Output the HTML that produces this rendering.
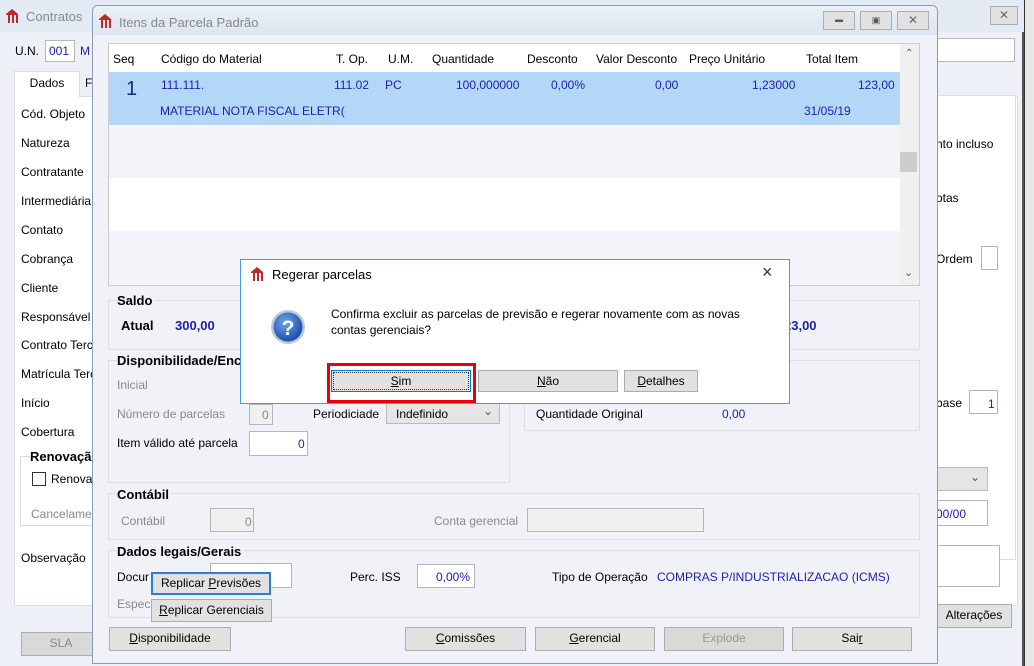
<!DOCTYPE html>
<html><head><meta charset="utf-8"><style>
*{box-sizing:border-box;margin:0;padding:0}
body{width:1034px;height:666px;overflow:hidden;background:#f0f0f0;font-family:"Liberation Sans",sans-serif;font-size:12px;color:#000;position:relative}
.a{position:absolute;white-space:nowrap}
.btn{position:absolute;background:#e1e1e1;border:1px solid #adadad;text-align:center;font-size:12px;line-height:21px}
.inp{position:absolute;background:#fff;border:1px solid #b5b5b5}
.grp{position:absolute;border:1px solid #dcdfe6;background:#f1f2f8}
.gl{position:absolute;font-weight:bold;font-size:13px;background:#f1f2f8;padding-right:3px}
.blue{color:#2020b0}
.gray{color:#888}
.logo{position:absolute;width:14px;height:14px}
</style></head><body>
<!-- back window -->
<div class="a" style="left:0;top:0;width:1024px;height:666px;background:#eef0f7;border-right:2px solid #555"></div>
<div class="a" style="left:0;top:0;width:1024px;height:32px;background:#e4eaf3"></div>
<div class="a" style="left:1024px;top:0;width:10px;height:666px;background:#e8e8e8;border-left:1px solid #333"></div>
<svg class="logo" style="left:5px;top:9px" viewBox="0 0 14 14"><path d="M1 5L7 0L13 5V14H11V6H9V14H7V6H5V14H3V6H1Z" fill="#c0282a"/></svg>
<div class="a" style="left:26px;top:9px;font-size:13px;color:#888">Contratos</div>
<div class="btn" style="left:990px;top:6px;width:28px;height:19px;line-height:16px;color:#666">✕</div>
<div class="a" style="left:15px;top:44px">U.N.</div>
<div class="inp" style="left:45px;top:40px;width:30px;height:22px"></div>
<div class="a blue" style="left:49px;top:44px">001</div>
<div class="a blue" style="left:80px;top:44px">M</div>
<div class="inp" style="left:935px;top:38px;width:80px;height:24px"></div>
<div class="a" style="left:14px;top:96px;width:1004px;height:510px;background:#fff;border:1px solid #ddd"></div>
<div class="a" style="left:14px;top:71px;width:66px;height:26px;background:#fff;border:1px solid #ddd;border-bottom:none;text-align:center;line-height:22px">Dados</div>
<div class="a" style="left:85px;top:76px">F</div>
<div class="a" style="left:21px;top:107px">Cód. Objeto</div>
<div class="a" style="left:21px;top:136px">Natureza</div>
<div class="a" style="left:21px;top:165px">Contratante</div>
<div class="a" style="left:21px;top:194px">Intermediária</div>
<div class="a" style="left:21px;top:223px">Contato</div>
<div class="a" style="left:21px;top:252px">Cobrança</div>
<div class="a" style="left:21px;top:281px">Cliente</div>
<div class="a" style="left:21px;top:310px">Responsável</div>
<div class="a" style="left:21px;top:338px">Contrato Terc</div>
<div class="a" style="left:21px;top:367px">Matrícula Terc</div>
<div class="a" style="left:21px;top:396px">Início</div>
<div class="a" style="left:21px;top:425px">Cobertura</div>
<div class="a" style="left:20px;top:456px;width:80px;height:70px;border:1px solid #ddd"></div>
<div class="a" style="left:30px;top:449px;font-weight:bold;font-size:13px;background:#fff">Renovaçã</div>
<div class="a" style="left:32px;top:472px;width:14px;height:14px;border:1px solid #333;background:#fff"></div>
<div class="a" style="left:51px;top:472px">Renova</div>
<div class="a gray" style="left:31px;top:507px">Cancelamen</div>
<div class="a" style="left:21px;top:551px">Observação</div>
<div class="btn" style="left:21px;top:632px;width:80px;height:24px;background:#d9d9d9;color:#888">SLA</div>
<div class="a" style="left:936px;top:95px;width:80px;height:465px;background:#fff;border:1px solid #ddd"></div>
<div class="a" style="left:936px;top:137px">nto incluso</div>
<div class="a" style="left:936px;top:191px">otas</div>
<div class="a" style="left:936px;top:252px">Ordem</div>
<div class="inp" style="left:981px;top:246px;width:17px;height:24px"></div>
<div class="a" style="left:936px;top:396px">base</div>
<div class="inp" style="left:969px;top:390px;width:29px;height:24px"></div>
<div class="a blue" style="left:988px;top:397px">1</div>
<div class="a" style="left:936px;top:467px;width:52px;height:24px;background:#e5e5e5;border:1px solid #bbb"></div>
<div class="a" style="left:970px;top:470px;color:#555">⌄</div>
<div class="inp" style="left:936px;top:500px;width:52px;height:26px"></div>
<div class="a blue" style="left:936px;top:507px">00/00</div>
<div class="inp" style="left:936px;top:545px;width:64px;height:42px"></div>
<div class="btn" style="left:936px;top:604px;width:76px;height:24px">Alterações</div>

<!-- front window -->
<div class="a" style="left:92px;top:5px;width:846px;height:659px;background:#f1f2f8;border:1px solid #8a9bb0;border-radius:6px 6px 0 0"></div>
<div class="a" style="left:93px;top:6px;width:844px;height:29px;background:linear-gradient(#eaf0f7,#dde5ef);border-radius:5px 5px 0 0"></div>
<svg class="logo" style="left:98px;top:14px" viewBox="0 0 14 14"><path d="M1 5L7 0L13 5V14H11V6H9V14H7V6H5V14H3V6H1Z" fill="#c0282a"/></svg>
<div class="a" style="left:119px;top:15px;font-size:13px;color:#888">Itens da Parcela Padrão</div>
<div class="btn" style="left:823px;top:11px;width:32px;height:19px;line-height:16px;font-size:8px;color:#555">▬</div>
<div class="btn" style="left:860px;top:11px;width:32px;height:19px;line-height:16px;font-size:9px;color:#555">▣</div>
<div class="btn" style="left:897px;top:11px;width:32px;height:19px;line-height:16px;color:#666">✕</div>
<!-- grid -->
<div class="a" style="left:108px;top:43px;width:812px;height:243px;background:#f3f4f9;border:1px solid #c8ccd4"></div>
<div class="a" style="left:109px;top:44px;width:791px;height:28px;background:#fff"></div>
<div class="a" style="left:109px;top:72px;width:791px;height:53px;background:#b3d7f7"></div>
<div class="a" style="left:109px;top:178px;width:791px;height:53px;background:#fff"></div>
<div class="a" style="left:900px;top:44px;width:19px;height:241px;background:#f0f0f0"></div>
<div class="a" style="left:900px;top:152px;width:17px;height:20px;background:#cdcdcd"></div>
<div class="a" style="left:905px;top:48px;font-size:10px;color:#555">⌃</div>
<div class="a" style="left:904px;top:266px;font-size:11px;color:#555">⌄</div>
<div class="a" style="left:113px;top:52px">Seq</div>
<div class="a" style="left:161px;top:52px">Código do Material</div>
<div class="a" style="left:336px;top:52px">T. Op.</div>
<div class="a" style="left:388px;top:52px">U.M.</div>
<div class="a" style="left:432px;top:52px">Quantidade</div>
<div class="a" style="left:527px;top:52px">Desconto</div>
<div class="a" style="left:596px;top:52px">Valor Desconto</div>
<div class="a" style="left:689px;top:52px">Preço Unitário</div>
<div class="a" style="left:806px;top:52px">Total Item</div>
<div class="a" style="left:126px;top:78px;font-size:20px;color:#1a2a80">1</div>
<div class="a blue" style="left:161px;top:78px">111.111.</div>
<div class="a blue" style="left:334px;top:78px">111.02</div>
<div class="a blue" style="left:385px;top:78px">PC</div>
<div class="a blue" style="left:456px;top:78px">100,000000</div>
<div class="a blue" style="left:551px;top:78px">0,00%</div>
<div class="a blue" style="left:655px;top:78px">0,00</div>
<div class="a blue" style="left:752px;top:78px">1,23000</div>
<div class="a blue" style="left:858px;top:78px">123,00</div>
<div class="a blue" style="left:160px;top:104px">MATERIAL NOTA FISCAL ELETR(</div>
<div class="a blue" style="left:804px;top:104px">31/05/19</div>
<!-- saldo -->
<div class="grp" style="left:108px;top:300px;width:812px;height:50px"></div>
<div class="gl" style="left:117px;top:293px">Saldo</div>
<div class="a" style="left:121px;top:318px;font-weight:bold;font-size:13px">Atual</div>
<div class="a blue" style="left:175px;top:318px;font-weight:bold;font-size:13px">300,00</div>
<div class="a blue" style="left:784px;top:318px;font-weight:bold;font-size:13px">23,00</div>
<!-- disponibilidade -->
<div class="grp" style="left:108px;top:360px;width:402px;height:123px"></div>
<div class="gl" style="left:117px;top:353px">Disponibilidade/Enc</div>
<div class="grp" style="left:524px;top:360px;width:396px;height:71px"></div>
<div class="a gray" style="left:117px;top:378px">Inicial</div>
<div class="a gray" style="left:117px;top:407px">Número de parcelas</div>
<div class="inp" style="left:249px;top:404px;width:24px;height:21px;background:#f0f0f0"></div>
<div class="a gray" style="left:262px;top:408px">0</div>
<div class="a" style="left:313px;top:407px">Periodiciade</div>
<div class="a" style="left:386px;top:402px;width:114px;height:22px;background:#e5e5e5;border:1px solid #bbb"></div>
<div class="a" style="left:396px;top:407px">Indefinido</div>
<div class="a" style="left:483px;top:404px;color:#555">⌄</div>
<div class="a" style="left:117px;top:436px">Item válido até parcela</div>
<div class="inp" style="left:249px;top:431px;width:59px;height:25px"></div>
<div class="a blue" style="left:298px;top:437px">0</div>
<div class="a" style="left:536px;top:407px">Quantidade Original</div>
<div class="a blue" style="left:722px;top:407px">0,00</div>
<!-- contabil -->
<div class="grp" style="left:108px;top:493px;width:812px;height:47px"></div>
<div class="gl" style="left:117px;top:487px">Contábil</div>
<div class="a gray" style="left:121px;top:514px">Contábil</div>
<div class="inp" style="left:210px;top:508px;width:44px;height:24px;background:#f0f0f0"></div>
<div class="a gray" style="left:245px;top:515px">0</div>
<div class="a gray" style="left:434px;top:514px">Conta gerencial</div>
<div class="inp" style="left:527px;top:508px;width:177px;height:24px;background:#f0f0f0"></div>
<!-- dados legais -->
<div class="grp" style="left:108px;top:550px;width:812px;height:68px"></div>
<div class="gl" style="left:117px;top:544px">Dados legais/Gerais</div>
<div class="a" style="left:117px;top:570px">Docur</div>
<div class="a gray" style="left:117px;top:597px">Espec</div>
<div class="inp" style="left:210px;top:563px;width:82px;height:25px"></div>
<div class="btn" style="left:151px;top:572px;width:120px;height:23px;border:2px solid #2a7fd4;line-height:19px">Replicar <u>P</u>revisões</div>
<div class="btn" style="left:151px;top:599px;width:121px;height:23px"><u>R</u>eplicar Gerenciais</div>
<div class="a" style="left:350px;top:570px">Perc. ISS</div>
<div class="inp" style="left:417px;top:564px;width:58px;height:24px"></div>
<div class="a blue" style="left:436px;top:570px">0,00%</div>
<div class="a" style="left:552px;top:570px">Tipo de Operação</div>
<div class="a blue" style="left:657px;top:570px">COMPRAS P/INDUSTRIALIZACAO (ICMS)</div>
<!-- bottom buttons -->
<div class="btn" style="left:109px;top:627px;width:122px;height:24px"><u>D</u>isponibilidade</div>
<div class="btn" style="left:405px;top:627px;width:121px;height:24px"><u>C</u>omissões</div>
<div class="btn" style="left:535px;top:627px;width:120px;height:24px"><u>G</u>erencial</div>
<div class="btn" style="left:664px;top:627px;width:120px;height:24px;background:#d9d9d9;color:#999">Explode</div>
<div class="btn" style="left:792px;top:627px;width:120px;height:24px">Sai<u>r</u></div>

<!-- dialog -->
<div class="a" style="left:240px;top:259px;width:550px;height:145px;background:#fff;border:1px solid #4a9ae0"></div>
<svg class="logo" style="left:250px;top:267px" viewBox="0 0 14 14"><path d="M1 5L7 0L13 5V14H11V6H9V14H7V6H5V14H3V6H1Z" fill="#c0282a"/></svg>
<div class="a" style="left:272px;top:267px;font-size:13px">Regerar parcelas</div>
<div class="a" style="left:762px;top:262px;font-size:18px;color:#333">×</div>
<svg class="a" style="left:270px;top:309px" width="36" height="36" viewBox="0 0 36 36"><defs><radialGradient id="g" cx="40%" cy="35%" r="65%"><stop offset="0" stop-color="#6fa4e8"/><stop offset="1" stop-color="#1c4fa8"/></radialGradient></defs><circle cx="18" cy="18" r="17" fill="#bcc6d4"/><circle cx="18" cy="18" r="14.5" fill="url(#g)"/><text x="18" y="26" text-anchor="middle" font-family="Liberation Sans" font-weight="bold" font-size="21" fill="#fff">?</text></svg>
<div class="a" style="left:331px;top:307px">Confirma excluir as parcelas de previsão e regerar novamente com as novas</div>
<div class="a" style="left:331px;top:323px">contas gerenciais?</div>
<div class="a" style="left:327px;top:363px;width:149px;height:40px;border:3px solid #e8000b"></div>
<div class="btn" style="left:331px;top:370px;width:140px;height:22px;border:1px solid #0078d7;line-height:19px"><span style="border:1px dotted #333;display:block;margin:1px;line-height:16px"><u>S</u>im</span></div>
<div class="btn" style="left:478px;top:370px;width:140px;height:22px;line-height:20px"><u>N</u>ão</div>
<div class="btn" style="left:624px;top:370px;width:74px;height:22px;line-height:20px"><u>D</u>etalhes</div>
</body></html>
